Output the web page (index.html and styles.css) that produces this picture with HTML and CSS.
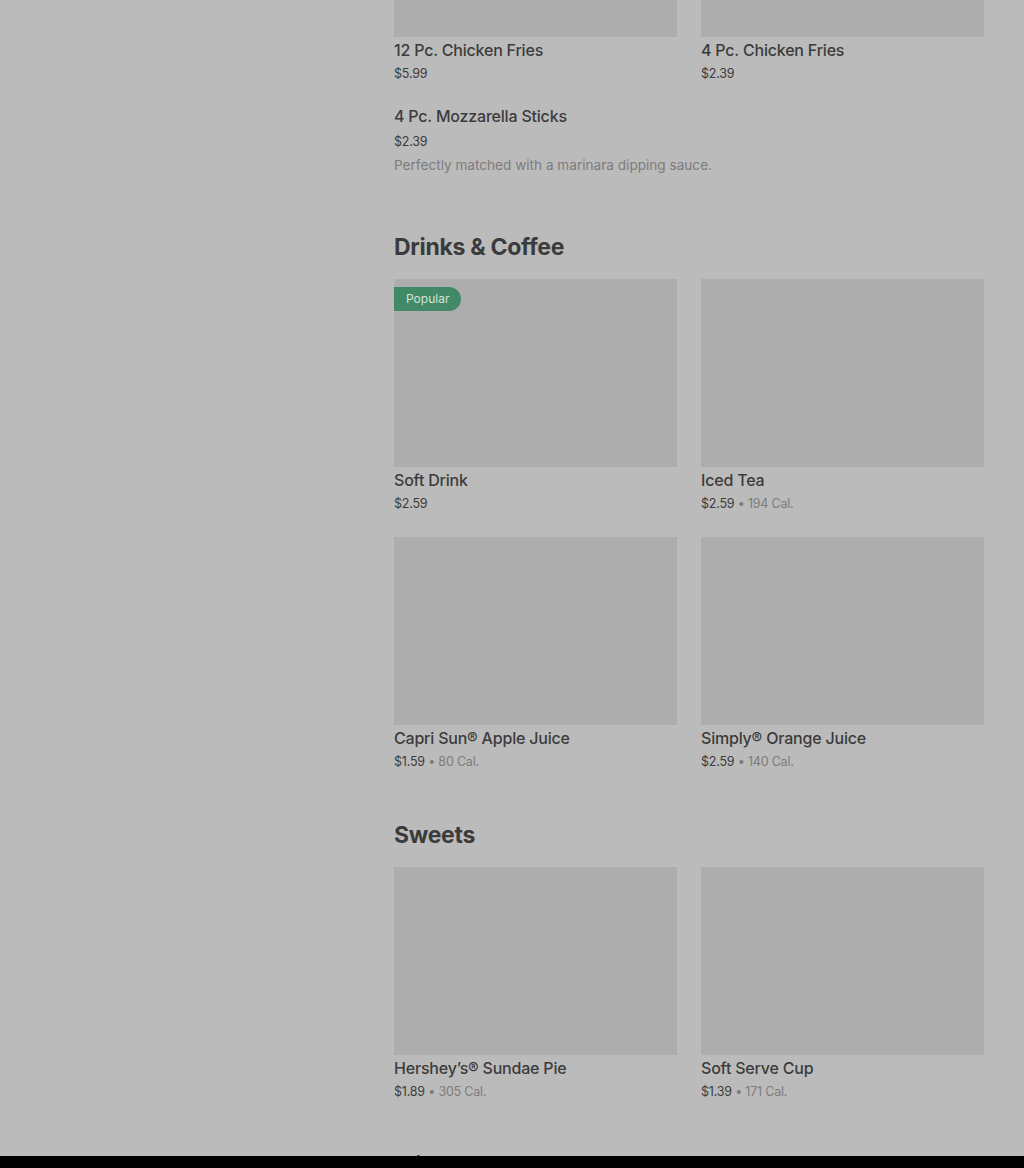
FILE: index.html
```html
<!DOCTYPE html>
<html lang="en">
<head>
  <meta charset="UTF-8">
  <title>Menu</title>
  <link rel="stylesheet" href="styles.css">
</head>
<body>

<div class="page">
  <aside class="side"></aside>

  <main class="menu">
    <section class="group first">
      <div class="grid">
        <div class="item">
          <div class="thumb"></div>
          <div class="name">12 Pc. Chicken Fries</div>
          <div class="meta">$5.99</div>
        </div>
        <div class="item">
          <div class="thumb"></div>
          <div class="name">4 Pc. Chicken Fries</div>
          <div class="meta">$2.39</div>
        </div>
      </div>
      <div class="item plain">
        <div class="name">4 Pc. Mozzarella Sticks</div>
        <div class="meta">$2.39</div>
        <div class="desc">Perfectly matched with a marinara dipping sauce.</div>
      </div>
    </section>

    <section class="group">
      <h2>Drinks &amp; Coffee</h2>
      <div class="grid">
        <div class="item">
          <div class="thumb"><span class="badge">Popular</span></div>
          <div class="name">Soft Drink</div>
          <div class="meta">$2.59</div>
        </div>
        <div class="item">
          <div class="thumb"></div>
          <div class="name">Iced Tea</div>
          <div class="meta">$2.59 <span class="cal">• 194 Cal.</span></div>
        </div>
        <div class="item">
          <div class="thumb"></div>
          <div class="name">Capri Sun® Apple Juice</div>
          <div class="meta">$1.59 <span class="cal">• 80 Cal.</span></div>
        </div>
        <div class="item">
          <div class="thumb"></div>
          <div class="name">Simply® Orange Juice</div>
          <div class="meta">$2.59 <span class="cal">• 140 Cal.</span></div>
        </div>
      </div>
    </section>

    <section class="group">
      <h2>Sweets</h2>
      <div class="grid">
        <div class="item">
          <div class="thumb"></div>
          <div class="name">Hershey’s® Sundae Pie</div>
          <div class="meta">$1.89 <span class="cal">• 305 Cal.</span></div>
        </div>
        <div class="item">
          <div class="thumb"></div>
          <div class="name">Soft Serve Cup</div>
          <div class="meta">$1.39 <span class="cal">• 171 Cal.</span></div>
        </div>
      </div>
    </section>

    <section class="group">
      <h2>Milkshakes</h2>
    </section>
  </main>
</div>

<div class="bottom-bar"></div>

</body>
</html>
```

FILE: styles.css
```css
body {
  margin: 0;
  background: #bbbbbb;
  font-family: Inter, "Noto Sans", sans-serif;
  color: #3b3b3b;
  overflow: hidden;
}
.page {
  display: flex;
  gap: 40px;
  padding-right: 40px;
  margin-top: -151px;
}
.side {
  width: 354px;
  flex-shrink: 0;
}
.menu {
  flex: 1;
}
.group {
  padding-top: 47px;
}
.group.first {
  padding-top: 0;
  padding-bottom: 9px;
}
h2 {
  margin: 0 0 16px;
  font-size: 23px;
  line-height: 32px;
  font-weight: 700;
  letter-spacing: -0.3px;
}
.grid {
  display: grid;
  grid-template-columns: 1fr 1fr;
  column-gap: 24px;
  row-gap: 23px;
}
.thumb {
  position: relative;
  height: 188px;
  background: #adadad;
}
.badge {
  position: absolute;
  left: 0;
  top: 8px;
  padding: 0 12px;
  height: 24px;
  line-height: 24px;
  font-size: 12px;
  background: #428a67;
  color: #d4e2d9;
  border-radius: 0 12px 12px 0;
}
.name {
  margin-top: 1px;
  font-size: 16px;
  line-height: 24px;
  font-weight: 500;
  letter-spacing: -0.2px;
}
.meta {
  font-size: 12.5px;
  line-height: 20px;
  margin-top: 2px;
  letter-spacing: -0.2px;
}
.cal {
  color: #7c7c7c;
}
.item.plain {
  padding-top: 19px;
}
.item.plain .meta {
  margin-top: 4px;
}
.desc {
  margin-top: 3px;
  font-size: 13.6px;
  line-height: 20px;
  color: #7c7c7c;
}
.bottom-bar {
  position: fixed;
  left: 0;
  right: 0;
  bottom: 0;
  height: 12px;
  background: #000;
}
```
